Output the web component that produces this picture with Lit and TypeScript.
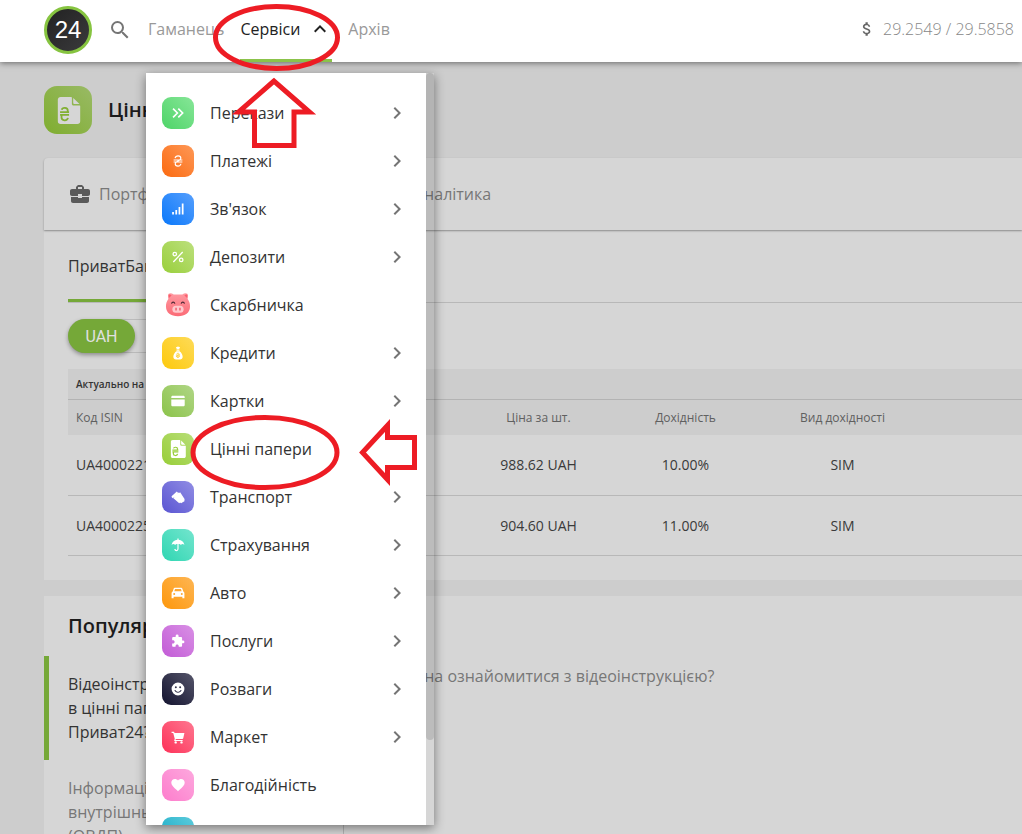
import { LitElement, html, svg, css, SVGTemplateResult } from "lit";
import { customElement, property } from "lit/decorators.js";
import { classMap } from "lit/directives/class-map.js";
import { styleMap } from "lit/directives/style-map.js";

const hryvnia = svg`<path d="M7 7.200C7.700 4.300 9.500 3.200 12.200 3.200c2.900 0 4.700 1.500 4.700 4C16.900 12 7.200 12 7.200 16.700c0 2.500 2 4 4.800 4 2.700 0 4.500-1.200 5-4M4.500 10.300h15M4.500 13.700h15" fill="none" stroke="currentColor" stroke-width="2"/>`;

const glyphs: Record<string, SVGTemplateResult> = {
  search: svg`<path d="M15.5 14h-.79l-.28-.27A6.47 6.47 0 0 0 16 9.5 6.5 6.5 0 1 0 9.5 16c1.61 0 3.09-.59 4.23-1.57l.27.28v.79l5 4.99L20.49 19l-4.99-5zm-6 0C7.01 14 5 11.99 5 9.5S7.01 5 9.5 5 14 7.01 14 9.5 11.99 14 9.5 14z"/>`,
  dollar: svg`<path d="M11.8 10.9c-2.27-.59-3-1.2-3-2.15 0-1.09 1.01-1.85 2.7-1.85 1.78 0 2.44.85 2.5 2.1h2.21c-.07-1.72-1.12-3.3-3.21-3.81V3h-3v2.16c-1.94.42-3.5 1.68-3.5 3.61 0 2.31 1.91 3.46 4.7 4.13 2.5.6 3 1.48 3 2.41 0 .69-.49 1.79-2.7 1.79-2.06 0-2.87-.92-2.98-2.1h-2.2c.12 2.19 1.76 3.42 3.68 3.83V21h3v-2.15c1.95-.37 3.5-1.5 3.5-3.55 0-2.84-2.43-3.81-4.7-4.4z"/>`,
  up: svg`<path d="M7.410 15.410 12 10.830l4.590 4.580L18 14l-6-6-6 6z"/>`,
  right: svg`<path d="M8.590 16.590 13.170 12 8.590 7.410 10 6l6 6-6 6z"/>`,
  briefcase: svg`<path d="M10 16v-1H3.010L3 19c0 1.110.89 2 2 2h14c1.110 0 2-.89 2-2v-4h-7v1h-4zm10-9h-4.010V5l-2-2h-4l-2 2v2H4c-1.100 0-2 .9-2 2v3c0 1.110.89 2 2 2h6v-2h4v2h6c1.100 0 2-.9 2-2V9c0-1.100-.9-2-2-2zm-6 0h-4V5h4v2z"/>`,
  transfer: svg`<path d="m3.500 4.500 7.500 7.500-7.500 7.500M12.500 4.500 20 12l-7.500 7.500" fill="none" stroke="currentColor" stroke-width="2.800"/>`,
  pay: hryvnia,
  signal: svg`<path d="M2 17h3v4.500H2zM7.500 13.500h3v8h-3zM13 8.500h3v13h-3zM18.500 2.500h3v19h-3z"/>`,
  percent: svg`<g fill="none" stroke="currentColor" stroke-width="2.200"><circle cx="6.500" cy="7" r="3"/><circle cx="17.500" cy="17" r="3"/><path d="M20 3.500 4 20.500"/></g>`,
  bag: svg`<path d="M8.500 1.500c2 1.300 2.500-.8 3.500-.8s1.500 2.100 3.500.8L14.200 5H9.800zM9.500 6.200h5v2h-5zM9.300 9h5.400c3 2 5.300 6 5.300 9.500 0 3-2 4.500-4.500 4.500h-7C6 23 4 21.500 4 18.500 4 15 6.300 11 9.300 9z"/><path d="M9.700 14c.4-2.200 4.600-2.100 4.300.2-.3 2-4.400 2-4.400 4 .1 2.200 4.300 2.100 4.700 0M8.500 15.500h7M8.500 17.500h7" fill="none" stroke="#fdcb25" stroke-width="1.300"/>`,
  card: svg`<path d="M.5 7V5.300c0-1.300.9-2.300 2.300-2.300h18.400c1.400 0 2.300 1 2.300 2.300V7zM.5 9.500h23v9.200c0 1.300-.9 2.300-2.300 2.300H2.800C1.400 21 .5 20 .5 18.700z"/>`,
  paper: svg`<path d="M5 0h9.500l.5.500V6c0 1 .6 1.600 1.600 1.600H22l.4.400v13.500c0 1.500-1 2.500-2.500 2.500H5c-1.500 0-2.500-1-2.500-2.500v-19C2.500 1 3.500 0 5 0zM16.200.8 21.800 6.300h-4.400c-.8 0-1.200-.4-1.200-1.200z"/><path d="M6 11.300c.5-2.300 5.300-2.200 5.300.5v1.400M4.500 13.400h8M4.500 15.800h8M11.500 18.600c-.6 3-5.700 2.700-5.700-.3v-2.500" fill="none" stroke="var(--tint)" stroke-width="1.600"/>`,
  ticket: svg`<path d="M1 10.500 10 2.500l2 2.200-8.500 9.600c-1.300-1-2.700-2.200-2.500-3.800zM5.500 10.800l7.400-6.500c1 .9 2.400.5 2.800-.4l7.800 11.800c-1 1.300-.6 2.500.1 3.300l-6.300 3.500c-1-1-2.300-.9-3.200.1L4.200 14c1.300-.8 1.800-2 1.300-3.200z"/>`,
  umbrella: svg`<path d="M11 1h2v2.200c5 .3 9 3.600 10 8.800-2-2-4.500-2-6-.2-1-1.300-2.300-1.900-4-1.600V18c0 6-7 6-7.300.8h2c.4 2.700 3.300 2.500 3.300-.8v-7.800c-1.700-.3-3 .3-4 1.600-1.500-1.800-4-1.800-6 .2 1-5.200 5-8.500 10-8.800z"/>`,
  car: svg`<path d="M6.500 3h11c1 0 1.700.5 2 1.500L21 9.500c1.200.7 2 1.700 2 3.300V21h-3.500v-2.500h-15V21H1v-8.200c0-1.600.8-2.600 2-3.300l1.500-5C4.800 3.500 5.500 3 6.500 3zm.4 2.200L5.700 9h12.600l-1.200-3.800zM5.500 12a1.700 1.700 0 1 0 0 3.400 1.700 1.700 0 0 0 0-3.400zm13 0a1.700 1.700 0 1 0 0 3.400 1.700 1.700 0 0 0 0-3.400z" fill-rule="evenodd"/>`,
  puzzle: svg`<path d="M20.500 11H19V7c0-1.100-.9-2-2-2h-4V3.500a2.500 2.500 0 0 0-5 0V5H4c-1.100 0-1.990.9-1.990 2v3.800H3.500c1.490 0 2.700 1.210 2.700 2.700s-1.210 2.700-2.700 2.700H2V20c0 1.100.9 2 2 2h3.800v-1.500c0-1.490 1.210-2.700 2.700-2.700s2.700 1.210 2.700 2.700V22H17c1.100 0 2-.9 2-2v-4h1.500a2.500 2.500 0 0 0 0-5z"/>`,
  smile: svg`<path fill-rule="evenodd" d="M12 1a11 11 0 1 0 0 22 11 11 0 0 0 0-22zM8.300 7.300a1.700 1.700 0 1 1 0 3.400 1.700 1.700 0 0 1 0-3.400zm7.400 0a1.700 1.700 0 1 1 0 3.400 1.700 1.700 0 0 1 0-3.400zM5.800 13.500h1.700c1.800 4 7.200 4 9 0h1.700c-1.900 6.400-10.500 6.400-12.400 0z"/>`,
  cart: svg`<path d="M1 3h4.200l.9 2H23l-2 9.200c-.2.800-.8 1.300-1.600 1.300H8.200l-.4 1.500H20v2H5.400l1-4L3.800 5H1z"/><circle cx="8" cy="21.300" r="2"/><circle cx="18" cy="21.300" r="2"/>`,
  heart: svg`<path d="m12 22.500-1.600-1.400C4.500 15.800.5 12.300.5 8c0-3.500 2.700-6.200 6.200-6.200 2 0 4 1 5.300 2.500C13.300 2.700 15.300 1.800 17.300 1.800c3.500 0 6.200 2.700 6.200 6.200 0 4.300-4 7.800-9.900 13.100z"/>`,
  pig: svg`<defs><linearGradient id="pg" x1="0" y1="0" x2="0" y2="1"><stop offset="0" stop-color="#ff9aa2"/><stop offset="1" stop-color="#fb6b76"/></linearGradient></defs><path d="M2.800 3.200C2.800 1 5.500.4 8 2.300h8c2.500-1.900 5.200-1.300 5.200.9l-.3 3.300c1.500 2 2.300 4.300 2.200 7.200-.2 5.600-4.400 8.700-11.100 8.700S1.100 19.300.9 13.700c-.1-2.900.7-5.200 2.200-7.200z" fill="url(#pg)"/><path d="M3.300 3.400c0-1.500 1.600-1.500 2.800-.2L3.600 5.500zM20.700 3.400c0-1.500-1.600-1.500-2.800-.2l2.500 2.300z" fill="#f9606d"/><rect x="6.800" y="12.600" width="10.400" height="6.600" rx="3.300" fill="#ffc9cd"/><path d="M10.200 14.500v2.600M13.800 14.500v2.600" stroke="#f2606e" stroke-width="1.400"/><path d="M6 10.700c.6-1.700 2.500-1.700 3.100 0M14.900 10.700c.6-1.700 2.500-1.700 3.100 0" stroke="#4c2a35" stroke-width="1.100" fill="none"/>`,
  none: svg``,
};

const icon = (name: string) =>
  html`<svg viewBox="0 0 24 24" fill="currentColor" aria-hidden="true">${glyphs[name]}</svg>`;

interface Service {
  label: string;
  glyph: string;
  from: string;
  to: string;
  leaf?: boolean;
}

const services: Service[] = [
  { label: "Перекази", glyph: "transfer", from: "#4ed468", to: "#87e698" },
  { label: "Платежі", glyph: "pay", from: "#fb6a10", to: "#fe9857" },
  { label: "Зв'язок", glyph: "signal", from: "#0a78fa", to: "#569ffd" },
  { label: "Депозити", glyph: "percent", from: "#99cf3c", to: "#bce07d" },
  { label: "Скарбничка", glyph: "pig", from: "transparent", to: "transparent", leaf: true },
  { label: "Кредити", glyph: "bag", from: "#fdc90c", to: "#fedb58" },
  { label: "Картки", glyph: "card", from: "#8bc34a", to: "#b0d686" },
  { label: "Цінні папери", glyph: "paper", from: "#98ce38", to: "#b8de78", leaf: true },
  { label: "Транспорт", glyph: "ticket", from: "#5a55d2", to: "#918de4" },
  { label: "Страхування", glyph: "umbrella", from: "#2fd6b2", to: "#74e5ce" },
  { label: "Авто", glyph: "car", from: "#fd970b", to: "#feb654" },
  { label: "Послуги", glyph: "puzzle", from: "#c25bd6", to: "#d990e5" },
  { label: "Розваги", glyph: "smile", from: "#13132f", to: "#55556a" },
  { label: "Маркет", glyph: "cart", from: "#fd3259", to: "#fe7790" },
  { label: "Благодійність", glyph: "heart", from: "#fd7dcc", to: "#fda8de", leaf: true },
  { label: "Ще", glyph: "none", from: "#12a9c4", to: "#5dcbdc", leaf: true },
];

@customElement("service-menu")
export class ServiceMenu extends LitElement {
  @property({ attribute: false }) items: Service[] = [];

  static styles = css`
    :host { display: flex; box-shadow: 0 3px 10px rgba(0, 0, 0, 0.45); overflow: hidden; }
    .list { flex: 1; min-width: 0; margin: 0; padding: 16px 0; list-style: none; background: #fff; }
    .link {
      display: flex; align-items: center; gap: 16px; height: 48px; padding: 0 17px 0 16px;
      color: #333; text-decoration: none; font-size: 16px; font-weight: 400;
    }
    .tile {
      display: grid; place-items: center; width: 32px; height: 32px; border-radius: 9px; color: #fff;
    }
    .tile svg { width: 14px; height: 14px; }
    .tile.pig svg { width: 26px; height: 26px; }
    .tile.paper svg { width: 18px; height: 18px; }
    .name { flex: 1; }
    .chevron { width: 24px; height: 24px; color: #757575; }
    .track { width: 8px; }
    .thumb { height: 667px; background: rgba(0, 0, 0, 0.12); border-radius: 4px; }
  `;

  render() {
    return html`
      <ul class="list">
        ${this.items.map((s) => html`
          <li>
            <a class="link" href="#">
              <span
                class=${classMap({ tile: true, pig: s.glyph === "pig", paper: s.glyph === "paper" })}
                style=${styleMap({ background: `linear-gradient(to top right, ${s.from}, ${s.to})`, "--tint": s.from })}
              >${icon(s.glyph)}</span>
              <span class="name">${s.label}</span>
              ${s.leaf ? "" : html`<span class="chevron">${icon("right")}</span>`}
            </a>
          </li>`)}
      </ul>
      <div class="track"><div class="thumb"></div></div>
    `;
  }
}

@customElement("app-root")
export class AppRoot extends LitElement {
  static styles = css`
    :host {
      display: block; position: relative; height: 100vh; overflow: hidden; background: #cdcdcd;
      font-family: "Open Sans", "Noto Sans", sans-serif; font-size: 16px; font-weight: 400; color: #333;
    }
    *, *::before, *::after { box-sizing: border-box; }
    svg { display: block; }
    a { color: inherit; text-decoration: none; }
    button { font: inherit; border: 0; background: none; padding: 0; color: inherit; }

    .header {
      position: relative; display: flex; height: 62px; padding: 0 8px 0 44px; background: #fff;
      box-shadow: 0 1px 6px rgba(0, 0, 0, 0.5);
    }
    .logo {
      display: grid; place-items: center; width: 48px; height: 48px; margin-top: 6px;
      border: 3px solid #86c440; border-radius: 50%; background: linear-gradient(135deg, #222, #3a3a3c);
      color: #fff; font-family: "Liberation Sans", Arial, sans-serif; font-size: 24px; font-weight: 400;
    }
    .search { width: 24px; height: 24px; margin: 18px 16px 0 16px; color: #757575; }
    .nav { display: flex; gap: 16px; height: 62px; color: #999; }
    .nav-item { display: flex; align-items: center; gap: 8px; height: 62px; padding-bottom: 5px; }
    .nav-item.active { color: #222; border-bottom: 3px solid #8bc34a; padding-bottom: 2px; }
    .nav-item svg { width: 24px; height: 24px; }
    .rate { display: flex; align-items: center; gap: 7px; height: 57px; margin-left: auto; color: #888; font-weight: 300; }
    .rate svg { width: 18px; height: 18px; color: #666; }

    .page { padding: 24px 0 0 44px; }
    .title-row { display: flex; align-items: center; gap: 16px; height: 48px; }
    .title-icon {
      --tint: #82b033; display: grid; place-items: center; width: 48px; height: 48px; border-radius: 13px;
      background: linear-gradient(to top right, #7fad2f, #99ba65); color: #d6d6d6;
    }
    .title-icon svg { width: 27px; height: 27px; }
    .title, .heading { margin: 0; font-size: 20px; line-height: 28px; font-weight: 600; color: #1b1b1b; }
    .card { background: #d6d6d6; }
    .sections {
      position: relative; display: flex; height: 72px; margin-top: 24px; padding-left: 24px; border-radius: 4px 0 0 0;
      box-shadow: 0 1px 2px rgba(0, 0, 0, 0.35);
    }
    .section { display: flex; align-items: center; gap: 7px; width: 315px; color: #777; }
    .section svg { width: 24px; height: 24px; color: #5a5a5a; }
    .offers { height: 350px; padding-left: 24px; }
    .banks { height: 73px; border-bottom: 1px solid #b8b8b8; }
    .bank { display: inline-block; height: 72px; padding-right: 16px; line-height: 72px; border-bottom: 3px solid #75a838; }
    .currencies { display: inline-flex; height: 34px; margin: 16px 0; border: 1px solid #bbb; border-left: 0; border-radius: 17px; }
    .currency {
      width: 67px; height: 34px; margin-top: -1px; border-radius: 17px; text-align: center;
      font-family: Roboto, sans-serif; font-weight: 400; color: #666;
    }
    .currency.active { background: #75a838; color: #e0e0e0; box-shadow: 0 2px 4px rgba(0, 0, 0, 0.35); }
    .table { width: 100%; border-collapse: collapse; table-layout: fixed; }
    .table th, .table td { padding: 0; text-align: center; }
    .table th:first-child, .table td:first-child { padding-left: 8px; text-align: left; }
    .table .actual { height: 30px; font-size: 10px; font-weight: 600; border-bottom: 1px solid #b3b3b3; }
    .table .label { height: 36px; font-size: 12px; font-weight: 400; color: #606060; }
    .table thead { background: #cdcdcd; }
    .table td { height: 60px; font-size: 14px; font-weight: 400; color: #3a3a3a; border-bottom: 1px solid #b8b8b8; }
    .c-code { width: 397px; }
    .c-price, .c-yield { width: 147px; }
    .c-kind { width: 167px; }

    .faq { display: flex; min-height: 400px; margin-top: 16px; }
    .topics { width: 300px; border-right: 1px solid #b3b3b3; }
    .heading { padding: 16px 0 16px 24px; }
    .topic { display: block; width: 100%; padding: 16px 24px; text-align: left; line-height: 24px; color: #777; }
    .topic.active { padding-left: 19px; border-left: 5px solid #75a838; color: #333; }
    .answer { margin: 0; padding: 68px 24px 0 23px; line-height: 24px; color: #777; }

    .menu { position: absolute; left: 146px; top: 73px; width: 288px; height: calc(100vh - 82px); }
    .marks { position: absolute; left: 0; top: 0; width: 1022px; height: 834px; pointer-events: none; }
  `;

  private rows = [
    ["UA4000221568", "988.62 UAH", "10.00%", "SIM"],
    ["UA4000225106", "904.60 UAH", "11.00%", "SIM"],
  ];

  render() {
    return html`
      <header class="header">
        <a class="logo" href="#">24</a>
        <button class="search" aria-label="Пошук">${icon("search")}</button>
        <nav class="nav">
          <a class="nav-item" href="#">Гаманець</a>
          <a class="nav-item active" href="#">Сервіси ${icon("up")}</a>
          <a class="nav-item" href="#">Архів</a>
        </nav>
        <div class="rate">${icon("dollar")}<span>29.2549 / 29.5858</span></div>
      </header>

      <main class="page">
        <div class="title-row">
          <span class="title-icon">${icon("paper")}</span>
          <h1 class="title">Цінні папери</h1>
        </div>
        <nav class="card sections">
          <a class="section" href="#">${icon("briefcase")}Портфель</a>
          <a class="section" href="#">${icon("none")}Аналітика</a>
        </nav>
        <section class="card offers">
          <div class="banks"><a class="bank" href="#">ПриватБанк</a></div>
          <div class="currencies">
            <button class="currency active">UAH</button>
            <button class="currency">USD</button>
          </div>
          <table class="table">
            <colgroup>
              <col class="c-code" /><col class="c-price" /><col class="c-yield" /><col class="c-kind" /><col />
            </colgroup>
            <thead>
              <tr><th class="actual" colspan="5">Актуально на</th></tr>
              <tr>
                <th class="label">Код ISIN</th><th class="label">Ціна за шт.</th>
                <th class="label">Дохідність</th><th class="label">Вид дохідності</th><th class="label"></th>
              </tr>
            </thead>
            <tbody>
              ${this.rows.map((r) => html`<tr>${r.map((c) => html`<td>${c}</td>`)}<td></td></tr>`)}
            </tbody>
          </table>
        </section>
        <section class="card faq">
          <div class="topics">
            <h2 class="heading">Популярні питання</h2>
            <button class="topic active">Відеоінструкція: як купити<br />в цінні папери у<br />Приват24?</button>
            <button class="topic">Інформація про<br />внутрішньої позики<br />(ОВДП)</button>
          </div>
          <p class="answer">Де можна ознайомитися з відеоінструкцією?</p>
        </section>
      </main>

      <service-menu class="menu" .items=${services}></service-menu>

      <svg class="marks" viewBox="0 0 1022 834" fill="none" stroke="#ed1c24" stroke-width="5" aria-hidden="true">
        <ellipse cx="276.500" cy="37.500" rx="61" ry="31" />
        <ellipse cx="265" cy="452.500" rx="72" ry="35" />
        <path d="M274 81 238.500 112H254.500V145.500H294V112H309.500Z" />
        <path d="M362.500 452.500 387.500 425.500V437.500H414.500V467.500H387.500V479.500Z" />
      </svg>
    `;
  }
}
